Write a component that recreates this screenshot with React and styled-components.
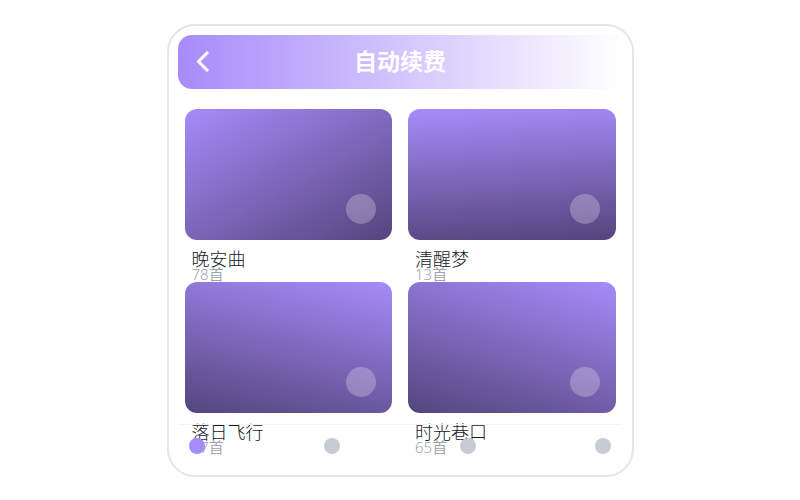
import React from 'react'
import styled, { createGlobalStyle } from 'styled-components'


const GlobalStyle = createGlobalStyle`
    * {
        box-sizing: border-box;
    }

    body {
        margin: 0;
        background: #fff;
        font-family: 'Noto Sans', 'Noto Sans CJK SC', sans-serif;
    }
`;

const Page = styled.main`
    display: flex;
    align-items: center;
    justify-content: center;
    min-height: 100vh;
`;

const Panel = styled.section`
    position: relative;
    width: 100%;
    max-width: 467px;
    padding: 9px 9px 20px;
    border: 2px solid #e5e5ea;
    border-radius: 28px;
    background: #fff;
`;

const Header = styled.header`
    display: grid;
    grid-template-columns: 52px 1fr 52px;
    align-items: center;
    height: 54px;
    padding-bottom: 2px;
    border-radius: 14px;
    background: linear-gradient(90deg, #a78bfa, #fff);
    color: #fff;
`;

const BackButton = styled.button`
    display: flex;
    align-items: center;
    justify-content: center;
    height: 52px;
    padding: 0;
    border: 0;
    background: none;
    color: inherit;
    cursor: pointer;
`;

const Title = styled.h1`
    margin: 0;
    font-size: 23px;
    font-weight: 700;
    line-height: 32px;
    text-align: center;
`;

const AlbumGrid = styled.ul`
    display: grid;
    grid-template-columns: 1fr 1fr;
    column-gap: 16px;
    margin: 20px 0 0;
    padding: 0 7px;
    list-style: none;
`;

const Cover = styled.div`
    display: flex;
    align-items: flex-end;
    justify-content: flex-end;
    height: 131px;
    padding: 16px;
    border-radius: 12px;
    background: linear-gradient(${({ $angle }) => $angle}deg, #a78bfa, #54457d);
`;

const PlayDot = styled.span`
    width: 30px;
    height: 30px;
    border-radius: 50%;
    background: rgba(255, 255, 255, 0.25);
`;

const Caption = styled.div`
    height: 42px;
    padding: 10px 7px 0;
`;

const AlbumName = styled.h2`
    margin: 0;
    color: #111827;
    font-size: 18px;
    font-weight: 300;
    line-height: 18px;
`;

const AlbumCount = styled.p`
    margin: 0;
    color: #9ca3af;
    font-size: 15px;
    font-weight: 350;
    line-height: 12px;
`;

const TabBar = styled.nav`
    position: absolute;
    right: 10px;
    bottom: 7px;
    left: 10px;
    display: flex;
    align-items: center;
    justify-content: space-between;
    height: 44px;
    padding: 0 10px;
    border-top: 1px solid #f3f4f6;
`;

const Tab = styled.button`
    width: 16px;
    height: 16px;
    padding: 0;
    border: 0;
    border-radius: 50%;
    background: ${({ $active }) => ($active ? '#a78bfa' : '#c7cbd3')};
    cursor: pointer;
`;

const albums = [
    { name: '晚安曲', count: 78, angle: 152 },
    { name: '清醒梦', count: 13, angle: 177 },
    { name: '落日飞行', count: 57, angle: 193 },
    { name: '时光巷口', count: 65, angle: 197 },
]

const tabs = ['首页', '发现', '收藏', '我的']


export default function App() {
    return (
        <Page>
            <GlobalStyle />
            <Panel>
                <Header>
                    <BackButton type="button" aria-label="返回">
                        <svg width="24" height="24" viewBox="0 0 24 24" fill="none" stroke="currentColor" strokeWidth="3" strokeLinejoin="round">
                            <path d="M16 3 L6.5 12.5 L16 22" />
                        </svg>
                    </BackButton>
                    <Title>自动续费</Title>
                </Header>
                <AlbumGrid>
                    {albums.map((album) => (
                        <li key={album.name}>
                            <Cover $angle={album.angle}>
                                <PlayDot />
                            </Cover>
                            <Caption>
                                <AlbumName>{album.name}</AlbumName>
                                <AlbumCount>{album.count}首</AlbumCount>
                            </Caption>
                        </li>
                    ))}
                </AlbumGrid>
                <TabBar>
                    {tabs.map((tab, idx) => (
                        <Tab key={tab} type="button" aria-label={tab} $active={idx === 0} />
                    ))}
                </TabBar>
            </Panel>
        </Page>
    )
}
